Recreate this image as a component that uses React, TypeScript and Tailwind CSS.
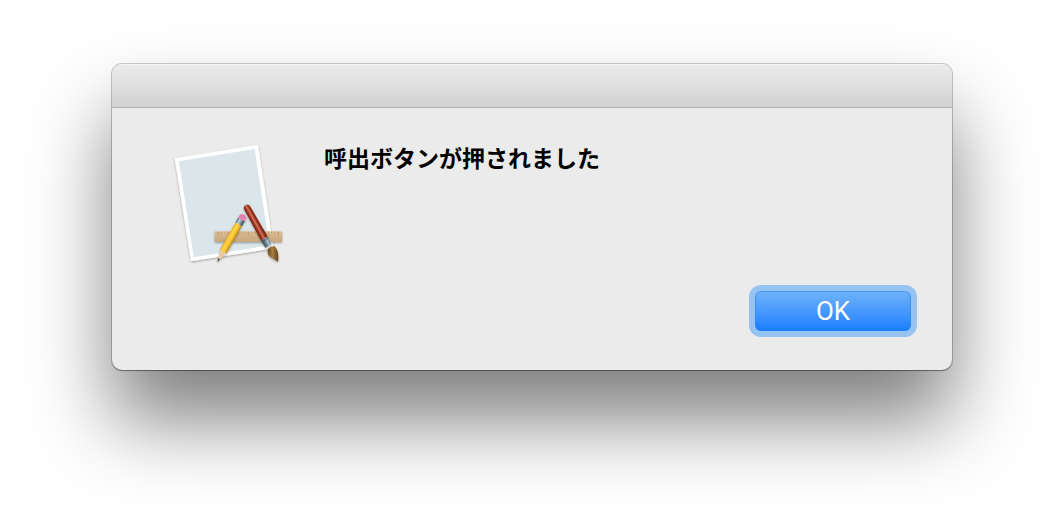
function AppIcon() {
  return (
    <svg className="h-[140px] w-[130px] shrink-0" viewBox="0 0 390 420" aria-hidden="true">
      <defs>
        <linearGradient id="ruler" x1="0" y1="0" x2="0" y2="1">
          <stop offset="0" stopColor="#e0c39b" />
          <stop offset="0.4" stopColor="#d2b38a" />
          <stop offset="1" stopColor="#c6a881" />
        </linearGradient>
        <linearGradient id="pencil" x1="0" y1="0" x2="1" y2="0">
          <stop offset="0" stopColor="#e9a91f" />
          <stop offset="0.3" stopColor="#ffd449" />
          <stop offset="0.65" stopColor="#fbc637" />
          <stop offset="1" stopColor="#b98212" />
        </linearGradient>
        <linearGradient id="metal" x1="0" y1="0" x2="1" y2="0">
          <stop offset="0" stopColor="#5c7284" />
          <stop offset="0.35" stopColor="#cfe0ec" />
          <stop offset="0.6" stopColor="#8fa3b2" />
          <stop offset="1" stopColor="#2f3b47" />
        </linearGradient>
        <linearGradient id="brushMetal" x1="0" y1="0" x2="1" y2="0">
          <stop offset="0" stopColor="#3c4850" />
          <stop offset="0.4" stopColor="#71828e" />
          <stop offset="0.7" stopColor="#a9c8de" />
          <stop offset="1" stopColor="#5d7385" />
        </linearGradient>
        <linearGradient id="handle" x1="0" y1="0" x2="1" y2="0">
          <stop offset="0" stopColor="#6d1d10" />
          <stop offset="0.3" stopColor="#a33a26" />
          <stop offset="0.5" stopColor="#d07a62" />
          <stop offset="0.7" stopColor="#a5341f" />
          <stop offset="1" stopColor="#6b170c" />
        </linearGradient>
        <linearGradient id="bristle" x1="0" y1="0" x2="1" y2="0">
          <stop offset="0" stopColor="#6b4a20" />
          <stop offset="0.45" stopColor="#a98046" />
          <stop offset="1" stopColor="#67451c" />
        </linearGradient>
        <filter id="drop" x="-20%" y="-20%" width="140%" height="150%">
          <feDropShadow dx="0" dy="3" stdDeviation="3" floodColor="#000" floodOpacity="0.35" />
        </filter>
      </defs>
      <g filter="url(#drop)">
        <path d="M29 70 L279 29 L326 340 L78 379Z" fill="#fff" />
      </g>
      <path d="M42 79 L269 42 L313 331 L86 367Z" fill="#dae6ea" />
      <g filter="url(#drop)">
        <rect x="149" y="289" width="202" height="32" fill="url(#ruler)" />
        <path
          d="M160 290v9M170 290v5M180 290v5M190 290v9M200 290v5M210 290v5M220 290v9M230 290v5M240 290v5M250 290v9M260 290v5M270 290v5M280 290v9M290 290v5M300 290v5M310 290v9M320 290v5M330 290v5M340 290v9"
          stroke="#a88658"
          strokeWidth="2"
        />
      </g>
      <g filter="url(#drop)">
        <g transform="translate(157 381) rotate(29.5)">
          <path d="M0 0 L-10 -36 L10 -36Z" fill="#e9cba2" />
          <path d="M0 0 L-3 -11 L3 -11Z" fill="#3c3c3c" />
          <path d="M-11 -34 V-132 H11 V-34 L5 -38 L0 -33 L-5 -38Z" fill="url(#pencil)" />
          <rect x="-11" y="-148" width="22" height="18" fill="url(#metal)" />
          <path d="M-11 -135H11M-11 -142H11" stroke="#4d5b67" strokeWidth="1.5" opacity="0.6" />
          <path d="M-11 -147 V-155 Q-10 -163 0 -163 Q10 -163 11 -155 V-147 Q0 -143 -11 -147Z" fill="#e583b0" />
        </g>
      </g>
      <g filter="url(#drop)">
        <g transform="translate(246 218) rotate(-29)">
          <path d="M-10 1 Q-9 -9 0 -9 Q9 -9 10 1 L12 105 Q0 110 -11 105Z" fill="url(#handle)" />
          <path d="M-11 105 Q0 110 12 105 L10 132 H-10Z" fill="url(#brushMetal)" />
          <path d="M-11 109 Q0 114 12 109" stroke="#36434d" strokeWidth="2" fill="none" />
        </g>
        <path d="M309 341 Q316 333 327 333 C338 342 342 355 339 381 C333 374 318 372 311 361 Q306 350 309 341Z" fill="url(#bristle)" />
        <path d="M315 342 Q318 358 334 373M323 338 Q333 352 337 372" stroke="#6d4a20" strokeWidth="2" fill="none" opacity="0.5" />
      </g>
    </svg>
  );
}

export default function App() {
  return (
    <main className="min-h-screen bg-white px-28 pt-16">
      <section
        role="alertdialog"
        aria-labelledby="alert-message"
        className="overflow-hidden rounded-[10px] bg-[#ebebeb] shadow-[0_0_0_1px_rgba(0,0,0,0.2),0_1px_1px_rgba(0,0,0,0.3),0_50px_80px_rgba(0,0,0,0.5)]"
      >
        <header className="h-11 border-t border-b border-t-[#f6f6f6] border-b-[#b2b2b2] bg-linear-to-b from-[#ebebeb] to-[#d1d1d1]" />
        <div className="flex gap-[29px] pt-[27px] pr-10 pl-[53px]">
          <AppIcon />
          <p
            id="alert-message"
            className="pt-1.5 font-['Noto_Sans_CJK_JP',sans-serif] text-[23px] leading-8 font-bold text-black"
          >
            呼出ボタンが押されました
          </p>
        </div>
        <footer className="flex justify-end pt-4 pr-[41px] pb-[39px]">
          <button
            type="button"
            className="h-10 w-[156px] rounded-md bg-linear-to-b from-[#6fb3fa] to-[#167dfe] font-[Roboto,sans-serif] text-[26px] leading-10 text-white shadow-[inset_0_0_0_1px_rgba(30,130,245,0.5),0_0_0_6px_#97c3f3]"
          >
            OK
          </button>
        </footer>
      </section>
    </main>
  );
}
